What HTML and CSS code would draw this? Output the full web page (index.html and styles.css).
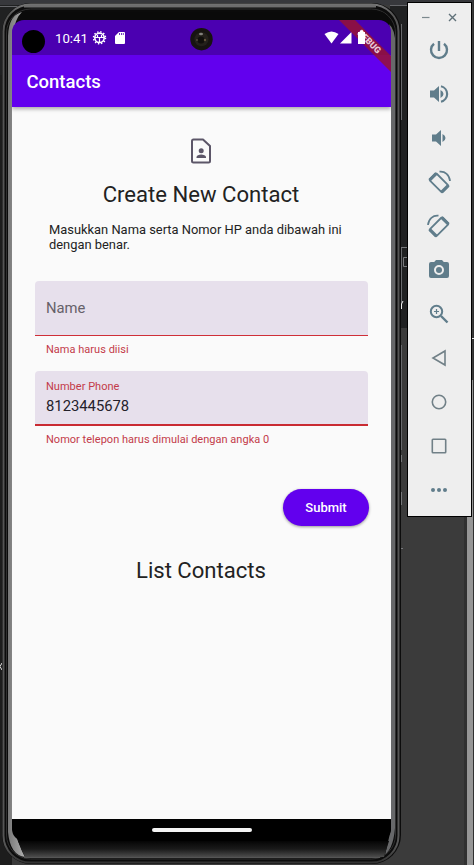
FILE: index.html
```html
<!DOCTYPE html>
<html lang="id">
<head>
<meta charset="utf-8">
<title>Contacts</title>
<link rel="stylesheet" href="styles.css">
</head>
<body>
<svg class="backdrop" width="474" height="865" viewBox="0 0 474 865">
  <rect width="474" height="865" fill="#3b3b3b"/>
  <rect width="12" height="865" fill="#1d1d1d"/>
  <rect width="474" height="5" fill="#37383c"/>
  <rect x="0" y="5" width="55" height="70" fill="#202122"/>
  <path d="M0 6.500H18M390 5.500H407" stroke="#65666a"/>
  <rect x="390" y="6" width="17" height="322" fill="#202122"/>
  <path d="M401.500 24V120M401.500 248V304M401.500 345V450" stroke="#68696d"/>
  <path d="M400 247.500H407M407 257.500H403.500V266.500H407M401 548.500H403" stroke="#77787b" fill="none"/>
  <path d="M401.500 455V462M401.500 492V505" stroke="#77787b"/>
  <path d="M403 301L401.500 304V309" stroke="#eee" fill="none"/>
  <path d="M2 663L0 666.500L2 670" stroke="#ddd" fill="none"/>
  <rect x="464" y="517" width="3" height="348" fill="#303030"/>
  <rect x="467" y="380" width="6" height="485" fill="#969696"/>
  <rect x="473" y="0" width="1" height="865" fill="#303030"/>
  <path d="M472 338.500H474" stroke="#eee"/>
</svg>
<main class="phone">
  <svg class="frame" width="402" height="865" viewBox="0 0 402 865">
    <defs>
      <linearGradient id="metal" x1="0" y1="0" x2="0" y2="1"><stop offset="0" stop-color="#777"/><stop offset=".012" stop-color="#555"/><stop offset=".98" stop-color="#555"/><stop offset="1" stop-color="#333"/></linearGradient>
      <linearGradient id="chin" x1="0" y1="0" x2="0" y2="1"><stop offset="0" stop-color="#050505"/><stop offset=".5" stop-color="#1a1a1a"/><stop offset="1" stop-color="#4c4c4c"/></linearGradient>
      <linearGradient id="left" x1="0" y1="0" x2="1" y2="0"><stop offset="0" stop-color="#777"/><stop offset="1" stop-color="#b0b0b0"/></linearGradient>
    </defs>
    <rect x="2" y="3" width="399" height="861" rx="29" fill="#0c0c0c"/>
    <rect x="3.500" y="4.500" width="395" height="858" rx="27" fill="none" stroke="url(#metal)" stroke-width="2"/>
    <path d="M24 6H376" stroke="#6d6d6d" stroke-width="3"/>
    <rect x="6.500" y="9" width="389" height="850" rx="24" fill="#0b0b0b" stroke="#303030"/>
    <path d="M8 36Q9 13 24 12L15 27L12 34V820L17 839L25 857Q10 855 8 832Z" fill="url(#left)"/>
    <path d="M391 33L385 22Q393 24 395 38V828Q393 852 382 856L388 832L391 820Z" fill="#67686a"/>
    <path d="M22 12H382Q390 15 390 35H13Q15 18 22 12Z" fill="#0a0a0a"/>
    <path d="M12 819H391V829L385 855Q383 857 378 857H25Q20 848 19 837L12 829Z" fill="#000"/>
    <path d="M18 841H389L384 857H25Q21 850 18 841Z" fill="url(#chin)"/>
    <path d="M24 857.500H380" stroke="#555"/>
  </svg>
  <section class="screen">
    <header class="statusbar">
      <span class="clock">10:41</span>
      <svg class="status-art" width="379" height="52" viewBox="12 20 379 52">
        <circle cx="33.500" cy="41.500" r="11.500" fill="#000"/>
        <g fill="none" stroke="#fff"><circle cx="99.500" cy="37.800" r="4.700" stroke-width="1.600"/><circle cx="99.500" cy="37.800" r="6" stroke-width="1.500" stroke-dasharray="1.400 1.742"/><path d="M95 37.500H104M99.500 38V42M97.500 35V37M101.500 35V37" stroke-width="1.200"/></g>
        <path d="M119 32H124Q125 32 125 33V43Q125 44 124 44H116Q115 44 115 43V36Z" fill="#fff"/>
        <path d="M119.500 33V35M121.500 33V35M123.300 33V35" stroke="#4b00b1" stroke-width=".8"/>
        <circle cx="201.500" cy="39.200" r="11.200" fill="#171311"/><circle cx="201.500" cy="39.200" r="7" fill="#24201b"/><circle cx="201" cy="40" r="3.500" fill="#100e0b"/><ellipse cx="201" cy="34" rx="2" ry="1.300" fill="#83817c"/><circle cx="205" cy="40" r="1.200" fill="#65543d"/><circle cx="197" cy="40" r=".8" fill="#756950"/>
        <path d="M324.500 34Q331.500 29 338.500 34L331.500 43.500Z" fill="#fff"/>
        <path d="M340 43.500L351.500 32V43.500Z" fill="#fff"/>
        <path d="M339 20H355L391 56V72Z" fill="#98122f" fill-opacity=".82"/>
        <text class="debug" transform="translate(369.500 41.500) rotate(45)" text-anchor="middle" y="3.300">DEBUG</text>
        <path d="M358 32H360V30.500H363V32H365V44H358Z" fill="#fff"/>
      </svg>
    </header>
    <div class="appbar">Contacts</div>
    <div class="content">
      <svg class="contact-icon" width="24" height="28" viewBox="0 0 24 28" fill="none" stroke="#5c5668" stroke-width="2"><path d="M4.500 2.500H14L21 9V24Q21 25.500 19.500 25.500H4.500Q3 25.500 3 24V4Q3 2.500 4.500 2.500Z" stroke-linejoin="round"/><circle cx="12.200" cy="13.700" r="2.500" fill="#5c5668" stroke="none"/><path d="M7.500 21V20C7.500 18.500 10 17.500 12.200 17.500S17 18.500 17 20V21Z" fill="#5c5668" stroke="none"/></svg>
      <h1>Create New Contact</h1>
      <p class="intro">Masukkan Nama serta Nomor HP anda dibawah ini dengan benar.</p>
      <div class="field empty"><span class="value">Name</span></div>
      <p class="error">Nama harus diisi</p>
      <div class="field active"><span class="label">Number Phone</span><span class="value">8123445678</span></div>
      <p class="error">Nomor telepon harus dimulai dengan angka 0</p>
      <button class="submit">Submit</button>
      <h2>List Contacts</h2>
    </div>
    <footer class="navbar"><span class="pill"></span></footer>
  </section>
</main>
<aside class="toolbar">
  <div class="window-controls">
    <svg width="11" height="11" viewBox="0 0 11 11"><path d="M2 5.500H9.500" stroke="#7c898e" stroke-width="1.200"/></svg>
    <svg width="11" height="11" viewBox="0 0 11 11"><path d="M2 2L9 9M9 2L2 9" stroke="#607179" stroke-width="1.400"/></svg>
  </div>
  <div class="tool"><svg viewBox="0 0 24 24"><path d="M12 3V13M7 5.700A8 8 0 1 0 17 5.700" fill="none" stroke="#607d8b" stroke-width="2.400"/></svg></div>
  <div class="tool"><svg viewBox="0 0 24 24"><path d="M3 8.500V15.500H7L12 20V4L7 8.500ZM13.500 8V16Q16.500 14.700 16.500 12T13.500 8Z" fill="#607d8b"/><path d="M14 4.300A7.900 7.900 0 0 1 14 19.700" fill="none" stroke="#607d8b" stroke-width="2.200"/></svg></div>
  <div class="tool"><svg viewBox="0 0 24 24"><path d="M5 8.500V15.500H9L14 20V4L9 8.500ZM15.500 8V16Q18.500 14.700 18.500 12T15.500 8Z" fill="#607d8b"/></svg></div>
  <div class="tool"><svg viewBox="0 0 24 24"><g fill="none" stroke="#607d8b"><g transform="translate(12 12.800) rotate(-45)"><rect x="-4.800" y="-9" width="9.600" height="18" rx="1" stroke-width="1.800"/><path d="M-4.800 -8.500H4.800M-4.800 8.500H4.800" stroke-width="3.200"/></g><path d="M12.500 1.700C18 1 22.500 5 23 11" stroke-width="1.700"/></g></svg></div>
  <div class="tool"><svg viewBox="0 0 24 24"><g fill="none" stroke="#607d8b"><g transform="translate(12 12.800) rotate(45)"><rect x="-4.800" y="-9" width="9.600" height="18" rx="1" stroke-width="1.800"/><path d="M-4.800 -8.500H4.800M-4.800 8.500H4.800" stroke-width="3.200"/></g><path d="M11.500 1.700C6 1 1.500 5 1 11" stroke-width="1.700"/></g></svg></div>
  <div class="tool"><svg viewBox="0 0 24 24"><path fill-rule="evenodd" d="M9 2L7.200 4H4Q2 4 2 6V18Q2 20 4 20H20Q22 20 22 18V6Q22 4 20 4H16.800L15 2ZM12 7A5 5 0 1 1 12 17A5 5 0 1 1 12 7Z" fill="#607d8b"/><circle cx="12" cy="12" r="3" fill="#607d8b"/></svg></div>
  <div class="tool"><svg viewBox="0 0 24 24" fill="none" stroke="#607d8b"><circle cx="9.500" cy="9.500" r="5.700" stroke-width="2"/><path d="M14 14L20.500 20.500" stroke-width="2.400"/><path d="M7 9.500H12M9.500 7V12" stroke-width="1.200"/></svg></div>
  <div class="tool"><svg viewBox="0 0 24 24"><path d="M18 5V19L6 12Z" fill="none" stroke="#718087" stroke-width="1.600"/></svg></div>
  <div class="tool"><svg viewBox="0 0 24 24"><circle cx="12" cy="12" r="6.700" fill="none" stroke="#718087" stroke-width="1.600"/></svg></div>
  <div class="tool"><svg viewBox="0 0 24 24"><rect x="5.300" y="5.300" width="13.400" height="13.400" rx=".7" fill="none" stroke="#718087" stroke-width="1.600"/></svg></div>
  <div class="tool"><svg viewBox="0 0 24 24" fill="#607d8b"><circle cx="6" cy="12" r="2"/><circle cx="12" cy="12" r="2"/><circle cx="18" cy="12" r="2"/></svg></div>
</aside>
</body>
</html>
```
FILE: styles.css
```css
* { box-sizing: border-box; }
body { margin: 0; width: 474px; height: 865px; overflow: hidden; position: relative; font-family: Roboto, sans-serif; background: #3b3b3b; }
svg { display: block; }
h1, h2, p { margin: 0; font-weight: 400; }
.backdrop, .frame { position: absolute; left: 0; top: 0; }
.phone { position: absolute; left: 0; top: 0; width: 402px; height: 865px; }
.screen { position: absolute; left: 12px; top: 20px; width: 379px; height: 821px; display: flex; flex-direction: column; border-radius: 12px; overflow: hidden; }
.statusbar { position: relative; z-index: 3; flex: 0 0 35px; background: #4b00b1; color: #fff; padding: 9px 0 0 43px; }
.clock { display: block; font-size: 13.2px; line-height: 19px; }
.status-art { position: absolute; left: 0; top: 0; }
.debug { fill: #e7c9d6; font-size: 9px; font-weight: 900; }
.appbar { position: relative; z-index: 2; flex: 0 0 52px; height: 52px; padding: 2px 0 0 14.5px; color: #fff; background: #6200ee; font-size: 18.5px; font-weight: 500; line-height: 50px; box-shadow: 0 2px 4px #0005; }
.content { flex: 1; background: #fafafa; padding: 30px 24px 0 23px; display: flex; flex-direction: column; color: #222; }
.contact-icon { align-self: center; }
h1, h2 { align-self: center; font-size: 22.1px; line-height: 30px; white-space: nowrap; }
h1 { margin-top: 14px; }
.intro { margin: 13px 0 0 14px; width: 315px; font-size: 12.9px; line-height: 15px; }
.field { display: flex; flex-direction: column; flex: none; height: 55px; width: 333px; padding: 0 11px; background: #e7e0ec; border-radius: 4px 4px 0 0; }
.empty { justify-content: center; margin-top: 29px; color: #666169; border-bottom: 1px solid #cf2f38; }
.value { font-size: 14.8px; line-height: 18px; }
.active { margin-top: 14px; padding-top: 9px; border-bottom: 2px solid #c92b32; color: #24202a; }
.label, .error { color: #c33b49; font-size: 11px; line-height: 14px; letter-spacing: .02px; }
.label { margin-bottom: 3px; }
.error { margin: 7px 0 0 11px; }
.submit { align-self: flex-end; width: 86px; height: 37px; margin: 42px -2px 0 0; padding: 0; border: 0; border-radius: 19px; background: #6200ee; box-shadow: 0 1px 3px #0006; color: #fff; font: 500 13px Roboto, sans-serif; }
h2 { margin-top: 29px; }
.navbar { flex: 0 0 22px; display: flex; align-items: center; justify-content: center; background: #000; }
.pill { width: 100px; height: 4px; border-radius: 2px; background: #f3f3f3; }
.toolbar { position: absolute; left: 407px; top: 2px; width: 65px; height: 515px; padding-right: 2px; border: 1px solid #000; background: #eee; display: flex; flex-direction: column; align-items: center; }
.window-controls { display: flex; gap: 16px; height: 25px; padding-top: 9px; flex: none; }
.tool { height: 44px; flex: none; display: grid; place-items: center; }
.tool svg { width: 24px; height: 24px; }
```
